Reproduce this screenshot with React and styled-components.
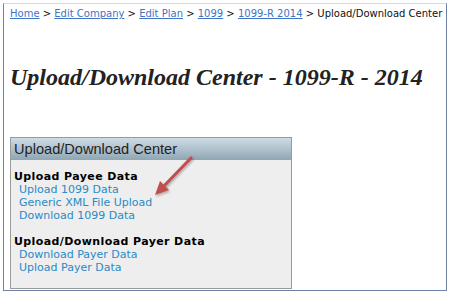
import styled, { createGlobalStyle } from "styled-components";

const GlobalStyle = createGlobalStyle`
  html, body {
    margin: 0;
    padding: 0;
    background: #ffffff;
  }
  body {
    font-family: Verdana, "DejaVu Sans", sans-serif;
  }
`;

export default function App() {
  return (
    <>
      <GlobalStyle />
      <Frame>
        <Crumbs>
          <CrumbLink href="#">Home</CrumbLink> &gt; <CrumbLink href="#">Edit Company</CrumbLink> &gt;{" "}
          <CrumbLink href="#">Edit Plan</CrumbLink> &gt; <CrumbLink href="#">1099</CrumbLink> &gt;{" "}
          <CrumbLink href="#">1099-R 2014</CrumbLink> &gt; Upload/Download Center
        </Crumbs>
        <Title>Upload/Download Center - 1099-R - 2014</Title>
        <Panel>
          <PanelHead>Upload/Download Center</PanelHead>
          <PanelBody>
            <Group>
              <GroupTitle>Upload Payee Data</GroupTitle>
              <ItemLink href="#">Upload 1099 Data</ItemLink>
              <ItemLink href="#">Generic XML File Upload</ItemLink>
              <ItemLink href="#">Download 1099 Data</ItemLink>
            </Group>
            <Group>
              <GroupTitle>Upload/Download Payer Data</GroupTitle>
              <ItemLink href="#">Download Payer Data</ItemLink>
              <ItemLink href="#">Upload Payer Data</ItemLink>
            </Group>
          </PanelBody>
          <Arrow width="50" height="50" viewBox="0 0 50 50">
            <defs>
              <filter id="sh" x="-30%" y="-30%" width="160%" height="160%">
                <feDropShadow dx="1" dy="1.5" stdDeviation="1" floodColor="#000" floodOpacity="0.3" />
              </filter>
            </defs>
            <g filter="url(#sh)" stroke="#c0504d" fill="#c0504d">
              <line x1="40" y1="3" x2="12" y2="32" strokeWidth="3.2" strokeLinecap="round" />
              <path d="M4 40 L9 26 L18 35 Z" stroke="none" />
            </g>
          </Arrow>
        </Panel>
      </Frame>
    </>
  );
}

const Frame = styled.div`
  box-sizing: border-box;
  margin: 3px 0 0 3px;
  width: 444px;
  height: 288px;
  border: 1px solid #6f81a4;
  border-top-color: #d3dae6;
  padding: 3px 6px 0 6px;
`;

const Crumbs = styled.div`
  font-family: Verdana, "DejaVu Sans", sans-serif;
  font-size: 10px;
  color: #111;
  line-height: 14px;
  white-space: nowrap;
`;

const CrumbLink = styled.a`
  color: #3f73c4;
  text-decoration: underline;
`;

const Title = styled.h1`
  margin: 42px 0 0 0;
  font-family: "Liberation Serif", "Times New Roman", serif;
  font-style: italic;
  font-weight: bold;
  font-size: 24px;
  line-height: 28px;
  color: #222222;
`;

const Panel = styled.div`
  position: relative;
  margin-top: 46px;
  width: 282px;
  height: 152px;
  box-sizing: border-box;
  border: 1px solid #9a9a9a;
  background: #eeeeee;
`;

const PanelHead = styled.div`
  height: 22px;
  padding-left: 3px;
  background: linear-gradient(to bottom, #cfdbe4 0%, #a9bcc8 60%, #8fa6b3 100%);
  font-family: "Liberation Sans", Arial, sans-serif;
  font-size: 14.6px;
  line-height: 22px;
  color: #1f1f1f;
`;

const PanelBody = styled.div`
  padding: 10px 3px 0 3px;
  display: flex;
  flex-direction: column;
  gap: 13px;
`;

const Group = styled.div`
  display: flex;
  flex-direction: column;
`;

const GroupTitle = styled.div`
  font-family: Verdana, "DejaVu Sans", sans-serif;
  font-weight: bold;
  font-size: 11px;
  letter-spacing: 0.4px;
  line-height: 13px;
  color: #000;
`;

const ItemLink = styled.a`
  margin-left: 5px;
  font-family: Verdana, "DejaVu Sans", sans-serif;
  font-size: 11px;
  line-height: 13px;
  color: #2a8ac6;
  text-decoration: none;
`;

const Arrow = styled.svg`
  position: absolute;
  left: 140px;
  top: 17px;
`;
